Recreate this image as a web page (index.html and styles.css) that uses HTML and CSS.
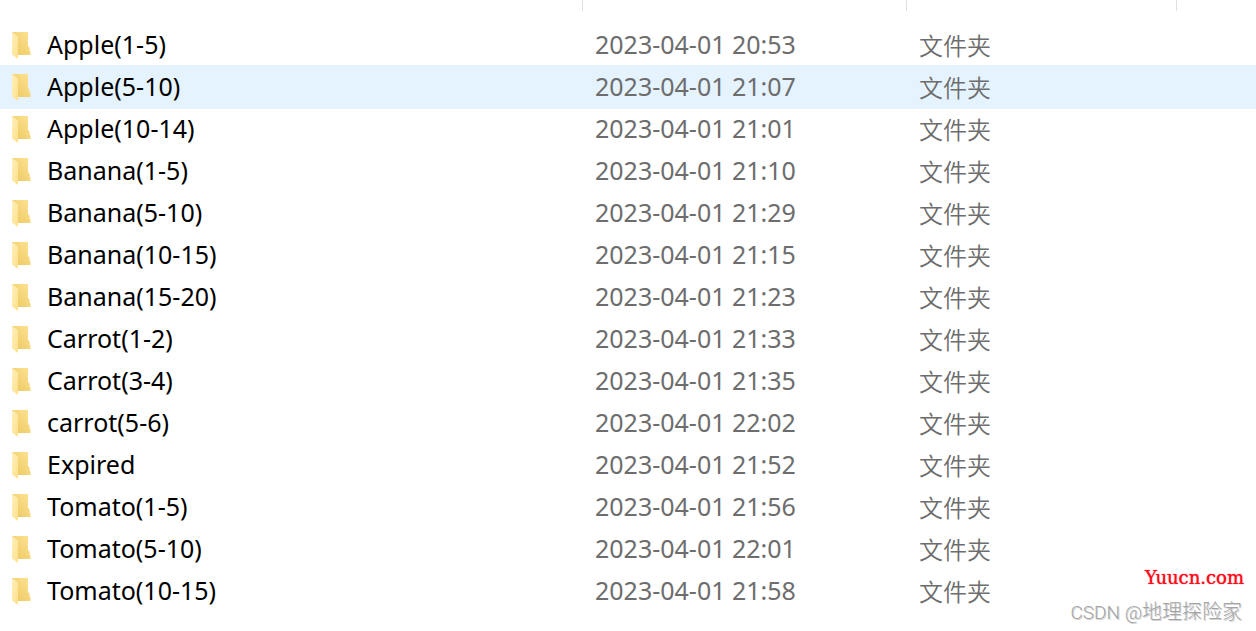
FILE: index.html
```html
<!DOCTYPE html>
<html lang="zh-CN">
<head>
<meta charset="utf-8">
<title>文件夹</title>
<link rel="stylesheet" href="styles.css">
</head>
<body>
<svg class="defs" aria-hidden="true">
  <defs>
    <linearGradient id="back" x1="0" y1="1" x2="1" y2="0">
      <stop offset="0" stop-color="#ebc75f"/>
      <stop offset="1" stop-color="#ffe394"/>
    </linearGradient>
    <linearGradient id="front" x1="0" y1="0" x2="1" y2="1">
      <stop offset="0" stop-color="#fff0bd"/>
      <stop offset="1" stop-color="#ffe08a"/>
    </linearGradient>
    <symbol id="folder" viewBox="0 0 20 28">
      <path fill="url(#back)" d="M0 0H16V14L17.6 15.5V18.5L18.5 19.5V23H4Z"/>
      <path fill="url(#front)" d="M0 0.2L6 4.6V27L0 22.6Z"/>
    </symbol>
  </defs>
</svg>
<main class="explorer">
  <table class="files">
    <colgroup><col class="col-name"><col class="col-date"><col class="col-type"><col></colgroup>
    <thead>
      <tr><td><div class="divider"></div></td><td><div class="divider"></div></td><td><div class="divider"></div></td><td></td></tr>
    </thead>
    <tbody>
      <tr><td class="name"><div class="entry"><svg class="icon"><use href="#folder"/></svg>Apple(1-5)</div></td><td class="date">2023-04-01 20:53</td><td class="type">文件夹</td><td></td></tr>
      <tr class="active"><td class="name"><div class="entry"><svg class="icon"><use href="#folder"/></svg>Apple(5-10)</div></td><td class="date">2023-04-01 21:07</td><td class="type">文件夹</td><td></td></tr>
      <tr><td class="name"><div class="entry"><svg class="icon"><use href="#folder"/></svg>Apple(10-14)</div></td><td class="date">2023-04-01 21:01</td><td class="type">文件夹</td><td></td></tr>
      <tr><td class="name"><div class="entry"><svg class="icon"><use href="#folder"/></svg>Banana(1-5)</div></td><td class="date">2023-04-01 21:10</td><td class="type">文件夹</td><td></td></tr>
      <tr><td class="name"><div class="entry"><svg class="icon"><use href="#folder"/></svg>Banana(5-10)</div></td><td class="date">2023-04-01 21:29</td><td class="type">文件夹</td><td></td></tr>
      <tr><td class="name"><div class="entry"><svg class="icon"><use href="#folder"/></svg>Banana(10-15)</div></td><td class="date">2023-04-01 21:15</td><td class="type">文件夹</td><td></td></tr>
      <tr><td class="name"><div class="entry"><svg class="icon"><use href="#folder"/></svg>Banana(15-20)</div></td><td class="date">2023-04-01 21:23</td><td class="type">文件夹</td><td></td></tr>
      <tr><td class="name"><div class="entry"><svg class="icon"><use href="#folder"/></svg>Carrot(1-2)</div></td><td class="date">2023-04-01 21:33</td><td class="type">文件夹</td><td></td></tr>
      <tr><td class="name"><div class="entry"><svg class="icon"><use href="#folder"/></svg>Carrot(3-4)</div></td><td class="date">2023-04-01 21:35</td><td class="type">文件夹</td><td></td></tr>
      <tr><td class="name"><div class="entry"><svg class="icon"><use href="#folder"/></svg>carrot(5-6)</div></td><td class="date">2023-04-01 22:02</td><td class="type">文件夹</td><td></td></tr>
      <tr><td class="name"><div class="entry"><svg class="icon"><use href="#folder"/></svg>Expired</div></td><td class="date">2023-04-01 21:52</td><td class="type">文件夹</td><td></td></tr>
      <tr><td class="name"><div class="entry"><svg class="icon"><use href="#folder"/></svg>Tomato(1-5)</div></td><td class="date">2023-04-01 21:56</td><td class="type">文件夹</td><td></td></tr>
      <tr><td class="name"><div class="entry"><svg class="icon"><use href="#folder"/></svg>Tomato(5-10)</div></td><td class="date">2023-04-01 22:01</td><td class="type">文件夹</td><td></td></tr>
      <tr><td class="name"><div class="entry"><svg class="icon"><use href="#folder"/></svg>Tomato(10-15)</div></td><td class="date">2023-04-01 21:58</td><td class="type">文件夹</td><td></td></tr>
    </tbody>
  </table>
  <div class="marks">
    <div class="site">Yuucn.com</div>
    <div class="author"><span class="brand">CSDN @</span>地理探险家</div>
  </div>
</main>
</body>
</html>
```
FILE: styles.css
```css
body {
  margin: 0;
  background: #fff;
  color: #000;
  font-family: "Noto Sans", "Noto Sans CJK SC", sans-serif;
  font-size: 25px;
}

.defs {
  position: absolute;
  width: 0;
  height: 0;
}

.explorer {
  position: relative;
  min-height: 100vh;
}

.files {
  width: 100%;
  table-layout: fixed;
  border-collapse: collapse;
}

.col-name { width: 583px; }
.col-date { width: 324px; }
.col-type { width: 270px; }

.files td {
  padding: 0;
  vertical-align: top;
}

.files thead td {
  height: 24px;
}

.divider {
  height: 11px;
  border-right: 1px solid #e0e0e0;
}

.files tbody td {
  height: 42px;
  line-height: 40px;
  white-space: nowrap;
}

.files .active {
  background: #e5f3ff;
  box-shadow: 0 -1px #e5f3ff, 0 1px #e5f3ff;
}

.files .name {
  padding-left: 12px;
}

.entry {
  display: flex;
  gap: 15px;
}

.icon {
  width: 20px;
  height: 28px;
  margin-top: 8px;
}

.files .date,
.files .type {
  padding-left: 12px;
  color: #6d6d6d;
}

.files tbody .type {
  font-family: "Noto Sans CJK SC", sans-serif;
  font-size: 24px;
  font-weight: 350;
  line-height: 42px;
}

.marks {
  position: absolute;
  right: 12px;
  bottom: 5px;
  text-align: right;
}

.site {
  color: #fe0d1d;
  font-family: "DejaVu Serif", serif;
  font-size: 18px;
  line-height: 24px;
  margin-bottom: 8px;
  text-shadow: 0 0 1px #fe0d1d;
}

.author {
  padding-right: 2px;
  color: #a4a4a4;
  font-family: "Noto Sans CJK SC", sans-serif;
  font-size: 20px;
  font-weight: 300;
  line-height: 26px;
  text-shadow: 1px 1px #8c8c8c66;
}

.brand {
  font-family: Roboto, sans-serif;
  font-size: 19px;
}
```
